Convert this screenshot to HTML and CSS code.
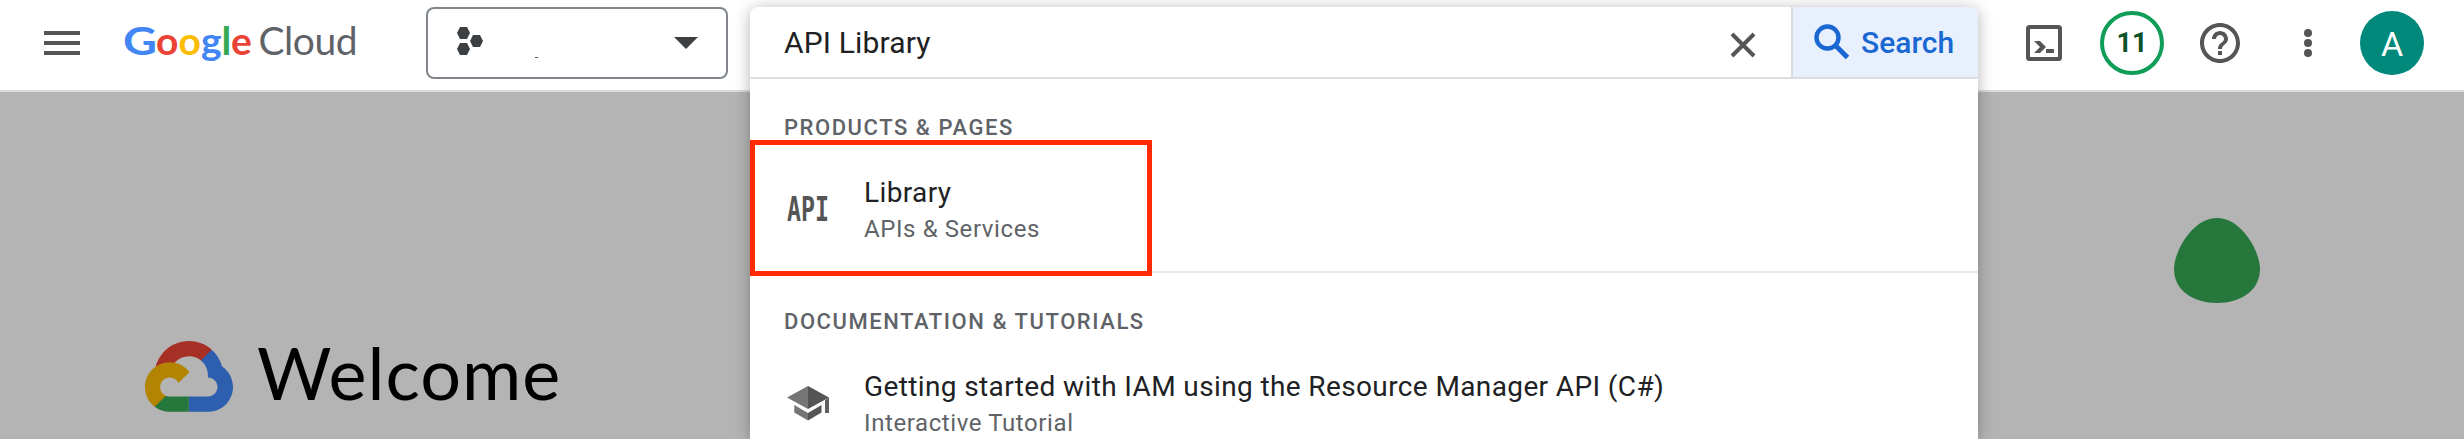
FILE: index.html
```html
<!DOCTYPE html>
<html lang="en">
<head>
<meta charset="utf-8">
<title>Google Cloud</title>
<link rel="stylesheet" href="styles.css">
</head>
<body>
<header class="topbar">
  <button class="menu" aria-label="Menu"><span></span><span></span><span></span></button>
  <svg class="brand" width="240" height="60" viewBox="0 0 240 60">
    <g class="brand-google">
      <text x="1" y="41" class="blue" textLength="34" lengthAdjust="spacingAndGlyphs">G</text>
      <text x="34" y="41" class="red">o</text>
      <text x="56.500" y="41" class="yellow">o</text>
      <text x="79" y="41" class="blue">g</text>
      <text x="99.500" y="41" class="green">l</text>
      <text x="109" y="41" class="red">e</text>
    </g>
    <text x="136.500" y="41" class="brand-cloud" textLength="99">Cloud</text>
  </svg>
  <button class="project" aria-label="Select project">
    <svg width="28" height="30" viewBox="0 0 28 30" fill="#3c4043">
      <path d="M4 1h7l3 6-3 6H4L1 7z"/>
      <path d="M4 17h7l3 6-3 6H4l-3-6z"/>
      <path d="M17 9h7l3 6-3 6h-7l-3-6z"/>
    </svg>
    <i class="project-name"></i>
    <svg class="caret" width="24" height="12" viewBox="0 0 24 12"><path d="M0 0h24L12 12z" fill="#3c4043"/></svg>
  </button>
  <div class="search">
    <div class="search-bar">
      <span class="query">API Library</span>
      <svg class="clear" width="26" height="26" viewBox="0 0 26 26"><path d="M2 2l22 22M24 2L2 24" stroke="#555" stroke-width="4"/></svg>
      <button class="search-btn">
        <svg width="36" height="36" viewBox="0 0 36 36" fill="none" stroke="#1967d2"><circle cx="13.5" cy="13.5" r="11" stroke-width="4.4"/><path d="M21 21l12.500 12.500" stroke-width="5"/></svg>
        <span>Search</span>
      </button>
    </div>
    <div class="results">
      <h2>PRODUCTS &amp; PAGES</h2>
      <div class="result">
        <svg class="api" width="44" height="44" viewBox="0 0 44 44"><text x="1" y="34" textLength="42" lengthAdjust="spacingAndGlyphs">API</text></svg>
        <div><p class="title">Library</p><p class="sub">APIs &amp; Services</p></div>
      </div>
      <h2 class="divided">DOCUMENTATION &amp; TUTORIALS</h2>
      <div class="result last">
        <svg class="cap" width="44" height="36" viewBox="0 0 44 36">
          <path d="M1 12.500L22 1v23z" fill="#757575"/><path d="M22 1l21 11.500L22 24z" fill="#555"/>
          <path d="M8.300 20L22 28v7.500L8.300 27.500z" fill="#757575"/><path d="M22 28l13.500-8v7.500L22 35.500z" fill="#555"/>
          <path d="M39 15l4-2.500V28h-4z" fill="#616161"/>
        </svg>
        <div><p class="title guide">Getting started with IAM using the Resource Manager API (C#)</p><p class="sub">Interactive Tutorial</p></div>
      </div>
      <div class="highlight"></div>
    </div>
  </div>
  <nav class="actions">
    <svg width="36" height="36" viewBox="0 0 36 36"><rect x="2" y="2" width="32" height="32" rx="1.500" fill="none" stroke="#555" stroke-width="4"/><path d="M8 16h6l6 6-6 6H8l6-6zM20 24h8v4h-8z" fill="#555"/></svg>
    <span class="count">11</span>
    <svg class="help" width="40" height="40" viewBox="2 2 20 20" fill="#555"><path d="M11 18h2v-2h-2v2zm1-16C6.480 2 2 6.480 2 12s4.480 10 10 10 10-4.480 10-10S17.520 2 12 2zm0 18c-4.410 0-8-3.590-8-8s3.590-8 8-8 8 3.590 8 8-3.590 8-8 8zm0-14c-2.210 0-4 1.790-4 4h2c0-1.100.9-2 2-2s2 .9 2 2c0 2-3 1.750-3 5h2c0-2.250 3-2.500 3-5 0-2.210-1.790-4-4-4z"/></svg>
    <svg class="more" width="8" height="28" viewBox="0 0 8 28" fill="#555"><circle cx="4" cy="4" r="4"/><circle cx="4" cy="14" r="4"/><circle cx="4" cy="24" r="4"/></svg>
    <span class="avatar">A</span>
  </nav>
</header>
<main class="page">
  <div class="welcome">
    <svg width="88" height="71" viewBox="0 0 256 206">
      <path fill="#a63026" d="M170.250 56.800l22.250-22.250 1.490-9.350C153.440-11.680 88.980-7.500 52.420 33.920 42.270 45.420 34.730 59.760 30.720 74.570l7.970-1.120 44.500-7.340 3.440-3.510c19.800-21.750 53.270-24.670 76.130-6.170z"/>
      <path fill="#2e5fae" d="M224.200 73.920c-5.110-18.840-15.610-35.770-30.210-48.720l-31.230 31.230c13.180 10.770 20.700 27.010 20.370 44.040v5.540c15.350 0 27.800 12.440 27.800 27.800 0 15.350-12.450 27.480-27.800 27.480h-55.670V205.800h55.670c39.930.3 72.560-31.500 72.870-71.430.18-24.200-11.750-46.890-31.800-60.450z"/>
      <path fill="#26773b" d="M71.870 205.800h55.590v-44.510H71.870c-3.960 0-7.800-.85-11.400-2.500l-7.890 2.420-22.400 22.250-1.960 7.580c12.570 9.490 27.900 14.820 43.650 14.760z"/>
      <path fill="#b38400" d="M71.870 61.430C31.940 61.660-.24 94.230 0 134.160c.13 22.300 10.550 43.290 28.220 56.880l32.250-32.250c-13.990-6.320-20.210-22.790-13.890-36.780 6.320-13.990 22.790-20.200 36.780-13.880 6.160 2.780 11.100 7.720 13.890 13.880l32.240-32.240c-13.720-17.940-35.040-28.430-57.620-28.340z"/>
    </svg>
    <h1>Welcome</h1>
  </div>
  <svg class="blob" width="86" height="85" viewBox="0 0 86 85"><path d="M43 0C68 0 86 34 86 51 86 73 66 85 43 85S0 73 0 51C0 34 18 0 43 0z" fill="#26773b"/></svg>
</main>
</body>
</html>
```
FILE: styles.css
```css
* { box-sizing: border-box; }
body {
  margin: 0;
  height: 439px;
  overflow: hidden;
  background: #b4b4b4;
  font-family: Roboto, "Liberation Sans", sans-serif;
}
button { padding: 0; border: 0; background: none; font: inherit; }
h1, h2, p { margin: 0; font-weight: 400; white-space: nowrap; }
svg { display: block; flex: none; }

.topbar {
  display: flex;
  align-items: flex-start;
  height: 92px;
  padding-left: 44px;
  background: #fff;
  border-bottom: 2px solid #dadce0;
}
.menu { display: flex; flex-direction: column; gap: 6px; width: 36px; margin-top: 31px; }
.menu span { height: 4px; background: #555; }

.brand { margin: 14px 0 0 42px; font-family: Lato, sans-serif; font-size: 41px; }
.brand-google { font-weight: 700; font-size: 39px; }
.brand .blue { fill: #4285f4; }
.brand .red { fill: #ea4335; }
.brand .yellow { fill: #fbbc04; }
.brand .green { fill: #34a853; }
.brand-cloud { fill: #5f6368; font-size: 39px; }

.project {
  display: flex;
  align-items: flex-start;
  width: 302px;
  height: 72px;
  margin: 7px 0 0 64px;
  padding: 17px 28px 0 28px;
  border: 2px solid #80868b;
  border-radius: 8px;
}
.project-name { width: 3px; height: 1px; margin: 31px 0 0 51px; background: #555; }
.caret { margin: 11px 0 0 auto; }

.search {
  position: relative;
  z-index: 1;
  width: 1228px;
  height: 432px;
  margin: 7px 0 0 22px;
  background: #fff;
  border-radius: 8px 8px 0 0;
  box-shadow: 0 2px 16px rgba(0, 0, 0, .3);
  flex: none;
}
.search-bar {
  display: flex;
  align-items: center;
  height: 72px;
  padding-left: 34px;
  border-bottom: 2px solid #dadce0;
  border-radius: 8px 8px 2px 2px;
  overflow: hidden;
}
.query { font-size: 30px; letter-spacing: .15px; color: #202124; }
.clear { margin: 6px 35px 0 auto; }
.search-btn {
  display: flex;
  align-items: center;
  gap: 11px;
  width: 187px;
  height: 70px;
  padding-left: 21px;
  background: #e8f0fe;
  border-left: 2px solid #dadce0;
  font-size: 30px;
  font-weight: 500;
  color: #1967d2;
}
.results h2 {
  height: 65px;
  padding: 33px 0 0 34px;
  font-size: 22px;
  line-height: 32px;
  font-weight: 500;
  letter-spacing: 1.55px;
  color: #5f6368;
}
.results .divided { height: 67px; border-top: 2px solid #e8eaed; }
.result { display: flex; padding: 29px 0 26px 36px; }
.result.last { padding-bottom: 0; }
.result > div { margin-left: 34px; }
.title { font-size: 28px; line-height: 40px; letter-spacing: .38px; color: #202124; }
.sub { font-size: 24px; line-height: 32px; letter-spacing: .6px; color: #5f6368; }
.api { margin-top: 14px; font: 700 33px "DejaVu Sans Mono", monospace; fill: #555; }
.cap { margin-top: 18px; }
.highlight {
  position: absolute;
  top: 133px;
  left: 0;
  width: 402px;
  height: 136px;
  border: 5px solid #ff2a00;
}

.actions { display: flex; align-items: center; height: 86px; margin-left: 48px; }
.count {
  width: 64px;
  height: 64px;
  margin-left: 38px;
  border: 4px solid #0f9d58;
  border-radius: 50%;
  font-size: 27px;
  line-height: 56px;
  font-weight: 700;
  text-align: center;
  color: #0d5228;
}
.help { margin-left: 36px; }
.more { margin-left: 64px; }
.avatar {
  width: 64px;
  height: 64px;
  margin-left: 48px;
  border-radius: 50%;
  background: #00897b;
  color: #fff;
  font-size: 34px;
  line-height: 66px;
  text-align: center;
}

.page { display: flex; justify-content: space-between; height: 347px; padding: 126px 204px 0 145px; }
.welcome { display: flex; align-items: flex-start; gap: 24px; padding-top: 123px; }
.welcome h1 { margin-top: -11px; font-family: Lato, sans-serif; font-size: 72px; line-height: 84px; letter-spacing: 1px; }
```
